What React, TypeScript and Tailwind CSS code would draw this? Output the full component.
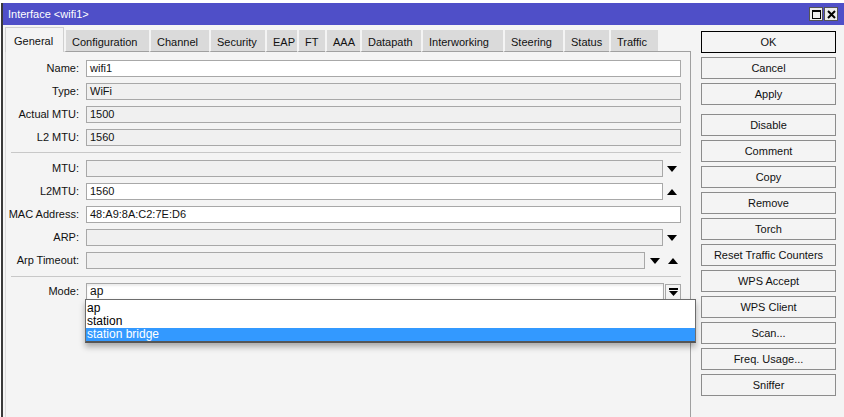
import React from 'react';

const tabs: { label: string; w: string }[] = [
  { label: 'Configuration', w: 'w-[85px]' },
  { label: 'Channel', w: 'w-[60px]' },
  { label: 'Security', w: 'w-[56px]' },
  { label: 'EAP', w: 'w-[32px]' },
  { label: 'FT', w: 'w-[28px]' },
  { label: 'AAA', w: 'w-[35px]' },
  { label: 'Datapath', w: 'w-[61px]' },
  { label: 'Interworking', w: 'w-[82px]' },
  { label: 'Steering', w: 'w-[60px]' },
  { label: 'Status', w: 'w-[46px]' },
  { label: 'Traffic', w: 'w-[49px]' },
];

const groupA = ['OK', 'Cancel', 'Apply'];
const groupB = [
  'Disable',
  'Comment',
  'Copy',
  'Remove',
  'Torch',
  'Reset Traffic Counters',
  'WPS Accept',
  'WPS Client',
  'Scan...',
  'Freq. Usage...',
  'Sniffer',
];

const Down = () => (
  <svg width="10" height="6" viewBox="0 0 10 6">
    <polygon points="0,0 10,0 5,6" fill="#000" />
  </svg>
);

const Up = () => (
  <svg width="10" height="6" viewBox="0 0 10 6">
    <polygon points="0,6 10,6 5,0" fill="#000" />
  </svg>
);

type FieldProps = {
  label: string;
  value?: string;
  editable?: boolean;
  width?: string;
  children?: React.ReactNode;
};

const Field: React.FC<FieldProps> = ({ label, value = '', editable, width = 'w-[595px]', children }) => (
  <div className="flex items-center h-[17px]">
    <div className="w-[73px] text-right text-[11px] text-[#111]">{label}</div>
    <div
      className={`ml-[7px] ${width} h-[17px] border border-[#a8a8a8] px-[3px] text-[11px] leading-[15px] text-[#111] ${
        editable ? 'bg-white' : 'bg-[#f0f0f0]'
      }`}
    >
      {value}
    </div>
    {children}
  </div>
);

const Separator = ({ className }: { className: string }) => (
  <div className={`ml-[5px] w-[670px] h-px bg-[#c8c8c8] ${className}`} />
);

export default function App() {
  return (
    <div
      className="w-[844px] h-[417px] overflow-hidden bg-white pt-[3px] pl-[1px]"
      style={{ fontFamily: '"Liberation Sans", Arial, sans-serif' }}
    >
      <div className="h-full border-l-2 border-[#3a3a3a] bg-[#f4f4f4] flex flex-col">
        {/* title bar */}
        <div className="h-[22px] bg-[#4f4fc8] flex items-center pl-[5px] pr-[6px]">
          <span className="text-white text-[11px]">Interface &lt;wifi1&gt;</span>
          <div className="ml-auto flex gap-[1px]">
            <div className="w-[14px] h-[14px] bg-[#ececec] border border-[#555] flex items-center justify-center">
              <div className="w-[9px] h-[9px] border border-black border-t-2" />
            </div>
            <div className="w-[14px] h-[14px] bg-[#ececec] border border-[#555] flex items-center justify-center">
              <svg width="9" height="9" viewBox="0 0 9 9">
                <path d="M1 1 L8 8 M8 1 L1 8" stroke="#000" strokeWidth="2" />
              </svg>
            </div>
          </div>
        </div>

        <div className="flex flex-1">
          {/* left part */}
          <div className="w-[688px] pl-[2px] flex flex-col">
            <div className="flex items-end h-[27px]">
              <div className="w-[59px] h-[25px] bg-[#f4f4f4] border-l border-t border-r border-[#d0d0d0] pl-[8px] pt-[5px] text-[11px] text-[#111]">
                General
              </div>
              {tabs.map((t) => (
                <div
                  key={t.label}
                  className={`${t.w} h-[22px] bg-[#dadada] border-l-2 border-[#f4f4f4] border-b border-b-[#a0a0a0] pl-[6px] pt-[4px] text-[11px] text-[#111]`}
                >
                  {t.label}
                </div>
              ))}
              <div className="flex-1 h-[22px] border-b border-[#a0a0a0]" />
            </div>

            <div className="flex-1 relative border-r border-[#a0a0a0] border-l border-l-[#dcdcdc] pt-[8px]">
              <div className="flex flex-col gap-[6px]">
                <Field label="Name:" value="wifi1" editable />
                <Field label="Type:" value="WiFi" />
                <Field label="Actual MTU:" value="1500" />
                <Field label="L2 MTU:" value="1560" />
              </div>
              <Separator className="mt-[6px] mb-[7px]" />
              <div className="flex flex-col gap-[6px]">
                <Field label="MTU:" width="w-[577px]">
                  <div className="ml-[4px] flex items-center">
                    <Down />
                  </div>
                </Field>
                <Field label="L2MTU:" value="1560" editable width="w-[577px]">
                  <div className="ml-[4px] flex items-center">
                    <Up />
                  </div>
                </Field>
                <Field label="MAC Address:" value="48:A9:8A:C2:7E:D6" editable />
                <Field label="ARP:" width="w-[577px]">
                  <div className="ml-[4px] flex items-center">
                    <Down />
                  </div>
                </Field>
                <Field label="Arp Timeout:" width="w-[559px]">
                  <div className="ml-[5px] flex items-center gap-[8px]">
                    <Down />
                    <Up />
                  </div>
                </Field>
              </div>
              <Separator className="mt-[7px] mb-[6px]" />

              {/* Mode with open dropdown */}
              <div className="flex items-center h-[17px]">
                <div className="w-[73px] text-right text-[11px] text-[#111]">Mode:</div>
                <div className="ml-[7px] relative w-[578px] h-[17px] border border-[#a8a8a8] bg-white px-[3px] text-[12px] leading-[15px] text-[#111] shadow-[inset_0_2px_2px_rgba(0,0,0,0.08)]">
                  ap
                  <div className="absolute left-[-2px] top-[15px] z-10 w-[611px] bg-white border border-[#6d6d6d] border-b-2 border-b-[#555] pt-[2px] text-[12px] leading-[13px] text-black shadow-[0_4px_6px_rgba(0,0,0,0.3)]">
                    <div className="pl-[1px]">ap</div>
                    <div className="pl-[1px]">station</div>
                    <div className="pl-[1px] bg-[#3399ff] text-white">station bridge</div>
                  </div>
                </div>
                <div className="ml-[1px] w-[16px] h-[16px] border border-[#a8a8a8] bg-[#f4f4f4] flex items-center justify-center">
                  <svg width="9" height="8" viewBox="0 0 9 8">
                    <rect x="0" y="0" width="9" height="2" fill="#000" />
                    <polygon points="0,3 9,3 4.5,8" fill="#000" />
                  </svg>
                </div>
              </div>
            </div>
          </div>

          {/* right column */}
          <div className="flex-1 pl-[10px] pt-[6px] flex flex-col">
            <div className="flex flex-col gap-[4px]">
              {groupA.map((b) => (
                <div
                  key={b}
                  className={`w-[135px] h-[22px] flex items-center justify-center bg-[#f4f4f4] text-[11px] text-[#111] border ${
                    b === 'OK' ? 'border-black' : 'border-[#8c8c8c]'
                  }`}
                >
                  {b}
                </div>
              ))}
            </div>
            <div className="flex flex-col gap-[4px] mt-[9px]">
              {groupB.map((b) => (
                <div
                  key={b}
                  className="w-[135px] h-[22px] flex items-center justify-center bg-[#f4f4f4] text-[11px] text-[#111] border border-[#8c8c8c] whitespace-nowrap"
                >
                  {b}
                </div>
              ))}
            </div>
          </div>
        </div>
      </div>
    </div>
  );
}
